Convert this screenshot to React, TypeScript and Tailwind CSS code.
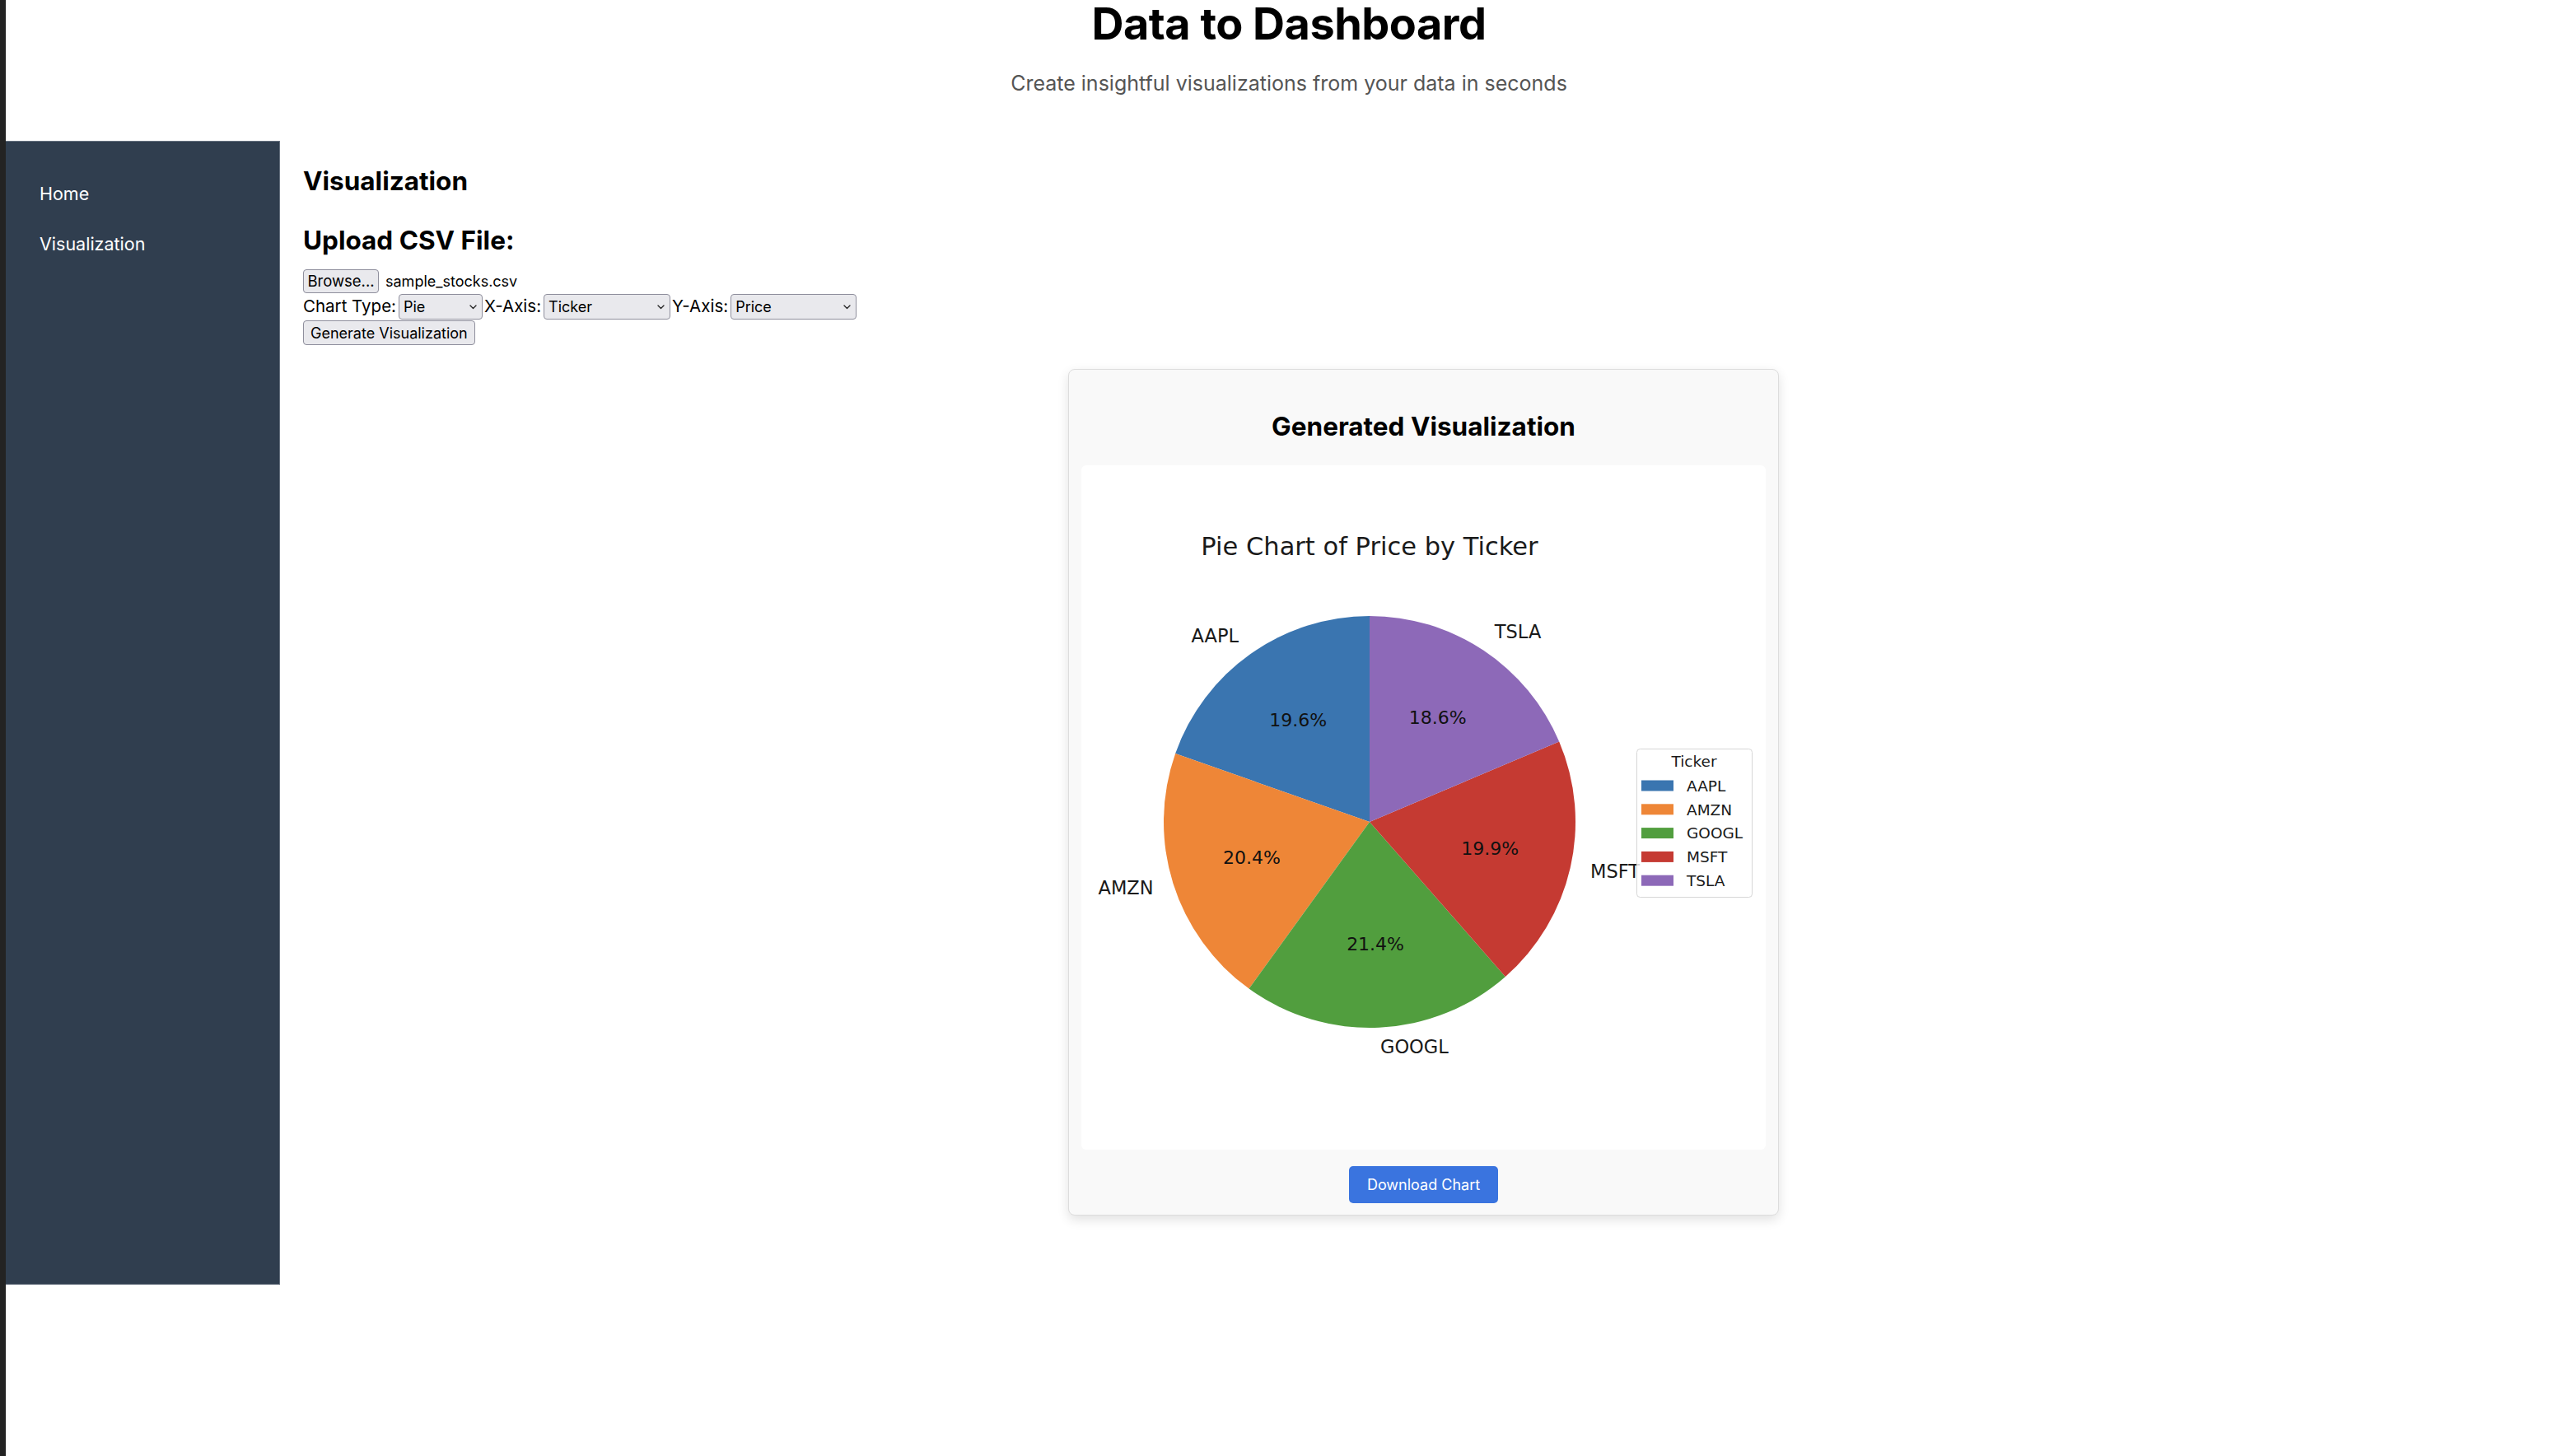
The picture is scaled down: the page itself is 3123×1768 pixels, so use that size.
import React from 'react';

interface Slice {
  label: string;
  pct: number;
  color: string;
}

const slices: Slice[] = [
  { label: 'AAPL', pct: 19.6, color: '#3a75b0' },
  { label: 'AMZN', pct: 20.4, color: '#ee8637' },
  { label: 'GOOGL', pct: 21.4, color: '#519e3e' },
  { label: 'MSFT', pct: 19.9, color: '#c53a32' },
  { label: 'TSLA', pct: 18.6, color: '#8d69b8' },
];

const CX = 350;
const CY = 433;
const R = 250;

function polar(deg: number, r: number): [number, number] {
  const a = (deg * Math.PI) / 180;
  return [CX + r * Math.cos(a), CY - r * Math.sin(a)];
}

function PieChart() {
  const total = slices.reduce((s, d) => s + d.pct, 0);
  let start = 90;
  const parts = slices.map((d) => {
    const sweep = (d.pct / total) * 360;
    const end = start + sweep;
    const mid = start + sweep / 2;
    const [x1, y1] = polar(start, R);
    const [x2, y2] = polar(end, R);
    const path = `M${CX},${CY} L${x1},${y1} A${R},${R} 0 ${sweep > 180 ? 1 : 0} 0 ${x2},${y2} Z`;
    start = end;
    return { ...d, path, mid };
  });

  return (
    <svg width="831" height="831" viewBox="0 0 831 831" fontFamily="DejaVu Sans, sans-serif">
      <text x={CX} y={109} textAnchor="middle" fontSize="30.5" fill="#1a1a1a">
        Pie Chart of Price by Ticker
      </text>
      {parts.map((p) => (
        <path key={p.label} d={p.path} fill={p.color} />
      ))}
      {parts.map((p) => {
        const [lx, ly] = polar(p.mid, R * 1.1);
        const right = Math.cos((p.mid * Math.PI) / 180) >= 0;
        return (
          <text
            key={p.label + '-l'}
            x={lx}
            y={ly + 0.276 * 22.5}
            textAnchor={right ? 'start' : 'end'}
            fontSize="22.5"
            fill="#1a1a1a"
          >
            {p.label}
          </text>
        );
      })}
      {parts.map((p) => {
        const [px, py] = polar(p.mid, R * 0.6);
        return (
          <text
            key={p.label + '-p'}
            x={px}
            y={py + 0.276 * 22}
            textAnchor="middle"
            fontSize="22"
            fill="#111"
          >
            {p.pct.toFixed(1)}%
          </text>
        );
      })}
      {/* legend */}
      <rect x="674.5" y="344.5" width="140" height="180" rx="4" fill="#ffffff" fillOpacity="0.8" stroke="#d6d6d6" />
      <text x="744" y="366" textAnchor="middle" fontSize="18.5" fill="#1a1a1a">
        Ticker
      </text>
      {parts.map((p, i) => {
        const cy = 389 + i * 28.8;
        return (
          <g key={p.label + '-g'}>
            <rect x="680" y={cy - 6.5} width="39" height="13" fill={p.color} />
            <text x="735" y={cy + 6.7} fontSize="18.5" fill="#1a1a1a">
              {p.label}
            </text>
          </g>
        );
      })}
    </svg>
  );
}

function Chevron() {
  return (
    <svg className="absolute right-[7px] top-1/2 -translate-y-1/2 pointer-events-none" width="9" height="6" viewBox="0 0 9 6" fill="none">
      <path d="M1 1l3.5 3.5L8 1" stroke="#222" strokeWidth="1.3" strokeLinecap="round" strokeLinejoin="round" />
    </svg>
  );
}

function FakeSelect({ value, width }: { value: string; width: string }) {
  return (
    <div className={`relative h-[31px] ${width}`}>
      <select
        defaultValue={value}
        className="h-full w-full appearance-none rounded-[4px] border border-[#8f8f9d] bg-[#e9e9ed] pl-[5px] text-[18px] text-black outline-none"
      >
        <option>{value}</option>
      </select>
      <Chevron />
    </div>
  );
}

export default function App() {
  return (
    <div className="flex min-h-screen font-['Inter',sans-serif] text-black">
      <div className="w-[7px] shrink-0 bg-[#232323]" />
      <div className="flex-1 bg-white">
        <header className="text-center">
          <h1 className="h-[57px] text-[54px] font-bold leading-[57px] tracking-[-0.5px]">Data to Dashboard</h1>
          <p className="mt-[29px] text-[25px] leading-[31px] text-[#555]">
            Create insightful visualizations from your data in seconds
          </p>
        </header>

        <div className="mt-[54px] flex">
          <aside className="h-[1389px] w-[333px] shrink-0 border-y border-r border-[#66717f] bg-[#303e4f]">
            <nav className="flex flex-col gap-[31px] pl-[41px] pt-[48px]">
              <a className="text-[21.5px] leading-[30px] text-white">Home</a>
              <a className="text-[21.5px] leading-[30px] text-white">Visualization</a>
            </nav>
          </aside>

          <main className="flex-1 pl-[28px] pr-[34px] pt-[31px]">
            <h2 className="text-[31.5px] font-bold leading-[36px]">Visualization</h2>
            <h3 className="mt-[35px] text-[31.5px] font-bold leading-[37px]">Upload CSV File:</h3>

            <div className="mt-[17px] flex h-[29px] items-center">
              <button className="h-[29px] w-[92px] rounded-[4px] border border-[#8f8f9d] bg-[#e9e9ed] text-[18.5px]">
                Browse...
              </button>
              <span className="ml-[8px] text-[18px]">sample_stocks.csv</span>
            </div>

            <div className="mt-[1px] flex h-[31px] items-center text-[20.5px]">
              <span>Chart Type:</span>
              <div className="ml-[3px]">
                <FakeSelect value="Pie" width="w-[102px]" />
              </div>
              <span className="ml-[2px]">X-Axis:</span>
              <div className="ml-[3px]">
                <FakeSelect value="Ticker" width="w-[154px]" />
              </div>
              <span className="ml-[2px]">Y-Axis:</span>
              <div className="ml-[3px]">
                <FakeSelect value="Price" width="w-[153px]" />
              </div>
            </div>

            <div className="mt-[1px]">
              <button className="h-[30px] rounded-[4px] border border-[#8f8f9d] bg-[#e9e9ed] px-[8px] text-[18px]">
                Generate Visualization
              </button>
            </div>

            <section className="mx-auto mt-[29px] w-[863px] rounded-[8px] border border-[#dddddd] bg-[#f9f9f9] px-[15px] pb-[14px] pt-[51px] shadow-[0_5px_14px_rgba(0,0,0,0.12)]">
              <h3 className="text-center text-[31.5px] font-bold leading-[36px]">Generated Visualization</h3>
              <div className="mt-[29px] h-[831px] w-[831px] overflow-hidden rounded-[6px] bg-white">
                <PieChart />
              </div>
              <div className="mt-[20px] flex justify-center">
                <button className="h-[45px] w-[181px] rounded-[5px] bg-[#3a74df] text-[18px] text-white">
                  Download Chart
                </button>
              </div>
            </section>
          </main>
        </div>
      </div>
    </div>
  );
}
